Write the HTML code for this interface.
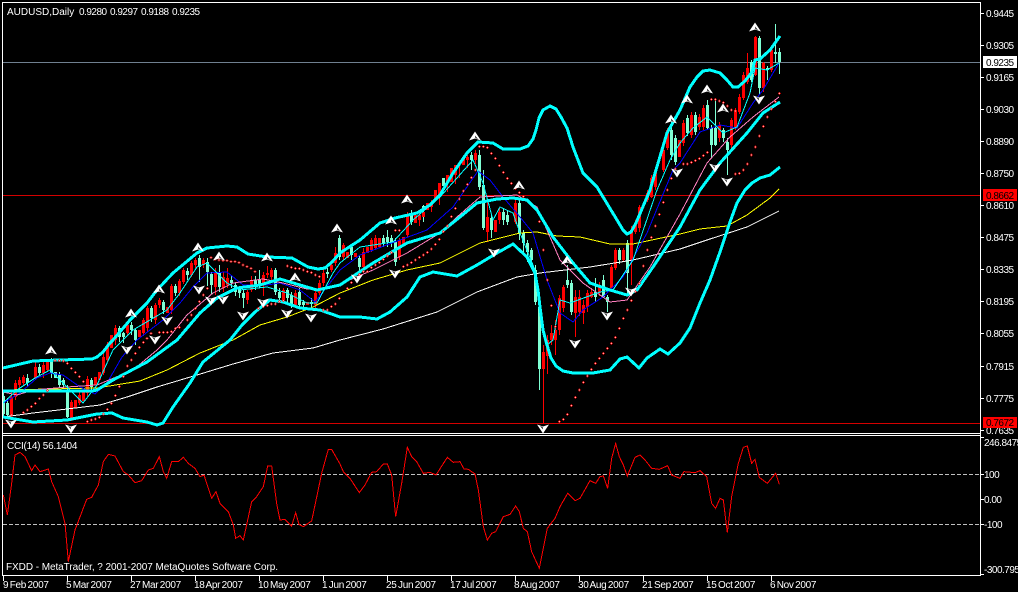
<!DOCTYPE html>
<html><head><meta charset="utf-8"><title>AUDUSD,Daily</title>
<style>
html,body{margin:0;padding:0;background:#000;width:1018px;height:592px;overflow:hidden}
svg{display:block;position:absolute;left:0;top:0}
text{font-family:"Liberation Sans",sans-serif;font-size:10px;fill:#fff}
.l{fill:none;shape-rendering:crispEdges}
.c{fill:none;stroke:#0ff;stroke-width:3;stroke-linejoin:round;shape-rendering:crispEdges}
.s{fill:none;stroke:none;marker-start:url(#dot);marker-mid:url(#dot);marker-end:url(#dot)}
.ax text,.n{letter-spacing:-.5px}
.t{letter-spacing:-.25px}
.f{letter-spacing:-.06px}
.dt text{letter-spacing:-.3px;word-spacing:-1px}
</style></head><body>
<svg width="1018" height="592" viewBox="0 0 1018 592" xmlns="http://www.w3.org/2000/svg">
<defs>
<marker id="dot" markerUnits="userSpaceOnUse" markerWidth="9" markerHeight="9" refX="4.5" refY="4.5" viewBox="0 0 9 9">
<path d="M3 0h3v3h3v3H6v3H3V6H0V3h3z" fill="#f00"/><rect x="3" y="3" width="3" height="3" fill="#fff"/>
</marker>
<g id="u" transform="translate(-.5,.5)"><path d="M6 0L12 9L6 7L0 9Z" fill="#fff"/><path d="M6 4L9 7.6L6.4 6.4Z" fill="#000"/></g>
<g id="d" transform="translate(-.5,.5)"><path d="M0 0L6 2L12 0L6 9Z" fill="#fff"/><path d="M6 5L3 1.4L5.6 2.6Z" fill="#000"/></g>
</defs>

<!-- horizontal levels -->
<path class="l" stroke="#708090" d="M3 62.5H980"/>
<path class="l" stroke="#d40000" d="M3 195.5H980M3 423.5H980"/>

<!-- wicks -->
<path class="l" stroke="#f00" d="M11.5 390V418M15.5 380V400M19.5 377V388M23.5 375V385M35.5 362V380M43.5 362V378M47.5 360V372M71.5 400V421M79.5 392V405M87.5 376V396M103.5 352V375M107.5 342V362M115.5 325V345M127.5 322V336M143.5 318V336M147.5 306V332M155.5 303V324M159.5 298V308M171.5 284V314M179.5 279V296M183.5 268V284M191.5 261V277M195.5 258V268M203.5 258V268M215.5 268V295M223.5 272V292M227.5 268V288M247.5 290V304M251.5 276V292M263.5 272V296M267.5 266V278M271.5 268V280M283.5 288V302M295.5 290V308M315.5 288V308M319.5 280V295M323.5 268V286M331.5 262V272M335.5 247V266M343.5 243V260M363.5 248V270M371.5 238V252M375.5 235V250M399.5 238V260M407.5 212V237M419.5 212V226M431.5 200V212M439.5 190V205M447.5 175V192M455.5 165V184M459.5 163V178M467.5 155V168M475.5 150V164M487.5 200V242M499.5 208V224M515.5 200V224M543.5 345V423M547.5 335V374M551.5 325V345M555.5 320V355M559.5 295V335M563.5 285V312M575.5 290V337M579.5 290V316M583.5 300V324M587.5 290V312M591.5 288V298M599.5 282V296M611.5 265V292M615.5 248V270M623.5 248V262M631.5 226V285M635.5 220V234M639.5 205V232M647.5 190V202M651.5 175V198M655.5 168V190M663.5 148V172M667.5 128V150M683.5 120V146M691.5 112V138M699.5 114V130M703.5 105V130M719.5 122V142M731.5 118V148M735.5 108V130M739.5 94V114M743.5 72V100M747.5 53V84M755.5 36V76M763.5 62V92M771.5 48V72"/>
<path class="l" stroke="#7fffd4" d="M3.5 392V417M7.5 398V418M27.5 374V386M39.5 364V376M51.5 358V378M59.5 372V388M63.5 378V388M67.5 385V418M91.5 378V390M119.5 326V342M123.5 332V343M131.5 322V335M135.5 328V345M151.5 306V322M163.5 300V314M175.5 284V296M187.5 268V280M199.5 255V282M207.5 258V286M211.5 272V294M219.5 265V292M231.5 276V288M235.5 282V296M239.5 286V298M243.5 290V308M255.5 276V290M259.5 270V288M275.5 268V295M279.5 288V302M287.5 288V302M291.5 292V308M299.5 288V308M303.5 300V310M311.5 298V308M327.5 268V278M339.5 235V260M351.5 244V260M359.5 255V272M383.5 235V247M387.5 230V247M391.5 235V247M395.5 238V266M411.5 210V225M423.5 205V222M471.5 152V170M479.5 150V190M483.5 170V230M491.5 215V238M503.5 208V225M507.5 210V225M519.5 198V240M523.5 230V255M527.5 240V262M531.5 248V265M535.5 265V305M539.5 300V390M567.5 265V288M571.5 280V315M595.5 278V302M603.5 275V298M607.5 295V312M619.5 248V264M627.5 240V295M671.5 122V160M675.5 135V165M687.5 115V136M695.5 112V135M707.5 100V130M711.5 125V158M715.5 100V146M723.5 128V142M727.5 138V175M751.5 60V82M759.5 36V94M767.5 66V80M775.5 24V63M779.5 48V74"/>
<!-- bodies -->
<path class="l" stroke="#f00" stroke-width="3" d="M11.5 397V415M15.5 383V397M19.5 380V385M23.5 377V383M35.5 367V378M43.5 365V373M47.5 362V370M71.5 402V418M75.5 400V408M79.5 395V403M83.5 390V401M87.5 379V393M95.5 377V385M99.5 372V380M103.5 357V373M107.5 345V360M111.5 335V348M115.5 328V340M127.5 325V333M139.5 330V337M143.5 320V333M147.5 308V328M155.5 305V320M159.5 300V305M167.5 307V313M171.5 286V310M179.5 281V293M183.5 270V282M191.5 263V275M195.5 260V265M203.5 260V265M215.5 272V287M223.5 277V288M227.5 278V285M247.5 292V300M251.5 280V290M263.5 275V283M267.5 273V275M271.5 270V277M283.5 290V300M295.5 293V305M307.5 302V305M315.5 293V305M319.5 283V293M323.5 273V283M331.5 265V270M335.5 253V263M343.5 245V257M347.5 252V258M355.5 253V257M363.5 252V267M367.5 247V253M371.5 240V250M375.5 238V248M379.5 238V247M399.5 240V257M403.5 237V245M407.5 215V235M415.5 215V223M419.5 215V220M423.5 212V217M427.5 203V210M431.5 203V207M435.5 190V200M439.5 183V195M447.5 175V183M451.5 168V182M455.5 165V175M463.5 157V165M467.5 157V160M475.5 153V160M487.5 217V232M495.5 220V232M499.5 212V220M515.5 203V222M543.5 352V369M547.5 340V356M551.5 333V340M555.5 330V340M559.5 298V330M563.5 287V308M575.5 297V313M579.5 297V312M583.5 305V313M587.5 293V307M591.5 292V297M599.5 285V293M611.5 267V288M615.5 250V268M623.5 250V260M631.5 230V260M635.5 223V232M639.5 207V228M647.5 193V200M651.5 178V197M655.5 170V187M663.5 150V170M667.5 130V148M679.5 140V157M683.5 123V143M691.5 115V135M699.5 117V127M703.5 108V127M719.5 125V138M731.5 120V145M735.5 110V127M739.5 97V112M743.5 75V98M747.5 68V82M755.5 37V75M763.5 63V88M771.5 50V70"/>
<path class="l" stroke="#7fffd4" stroke-width="3" d="M3.5 396V414M7.5 403V415M27.5 378V383M39.5 367V373M51.5 362V373M55.5 372V378M59.5 375V385M63.5 380V385M67.5 390V417M91.5 380V387M119.5 328V337M123.5 333V337M131.5 325V330M135.5 330V340M151.5 308V318M163.5 302V310M175.5 286V293M187.5 271V275M199.5 258V267M207.5 262V272M211.5 274V285M219.5 272V287M231.5 280V283M235.5 285V292M239.5 288V293M243.5 293V298M255.5 280V285M259.5 280V285M275.5 270V292M279.5 292V298M287.5 290V298M291.5 295V305M299.5 292V305M303.5 302V305M311.5 302V304M327.5 272V274M339.5 238V257M351.5 247V255M359.5 258V267M383.5 238V243M387.5 237V242M391.5 238V243M395.5 242V262M411.5 213V222M423.5 206V210M443.5 178V186M471.5 155V160M479.5 155V187M483.5 185V228M491.5 218V230M503.5 212V220M507.5 215V222M519.5 203V233M523.5 233V243M527.5 243V252M531.5 250V260M535.5 270V302M539.5 307V369M567.5 280V285M571.5 283V312M595.5 292V297M603.5 280V297M607.5 297V302M619.5 250V260M627.5 243V273M671.5 130V155M675.5 138V162M687.5 118V133M695.5 115V132M707.5 105V128M711.5 128V145M715.5 128V145M723.5 130V138M727.5 142V150M751.5 62V80M759.5 38V88M767.5 68V70M775.5 52V54M779.5 52V62"/>

<!-- moving averages -->
<polyline class="l" stroke="#fff" points="3,417 33,413 67,409 100,405 127,397 157,387 197,375 233,364 273,353 313,348 340,340 383,329 437,312 477,292 517,277 540,273 590,267 633,260 680,249 710,239 747,227 779,211"/>
<polyline class="l" stroke="#ff0" points="3,390 97,388 140,381 167,370 200,353 233,340 260,325 287,317 313,307 340,293 373,280 407,270 440,263 460,253 480,243 520,233 537,232 557,236 580,237 610,244 633,244 680,234 700,229 727,226 747,215 770,198 779,189"/>
<polyline class="l" stroke="#00f" points="3,403 20,393 37,378 50,373 63,375 80,387 95,394 107,383 122,357 137,340 163,320 180,303 193,287 207,273 227,272 243,285 267,285 280,283 300,290 315,302 340,270 360,255 400,240 427,230 453,207 478,171 490,180 503,197 520,217 533,233 547,280 560,313 573,322 583,310 603,297 623,277 647,233 673,170 680,163 700,132 720,125 737,128 753,103 763,90 779,63"/>
<polyline class="l" stroke="#ff80c0" points="3,392 17,395 33,390 67,387 97,385 133,370 157,350 167,340 187,315 213,293 233,283 263,279 283,283 307,289 320,290 340,284 373,270 407,253 440,233 457,217 480,197 517,195 537,207 560,260 583,283 610,302 627,300 650,267 680,214 707,163 730,137 753,117 779,97"/>
<polyline class="l" stroke="#0ff" points="3,403 17,390 35,378 50,370 63,383 83,403 97,385 113,350 133,330 167,310 180,293 197,267 207,263 227,283 240,290 267,287 287,293 307,303 317,303 333,273 340,263 360,247 393,242 413,220 440,197 473,160 483,183 493,220 500,207 513,213 520,233 535,270 540,313 547,345 553,340 560,300 570,303 600,292 613,290 633,260 657,190 670,160 680,143 693,128 707,117 723,133 737,127 750,93 755,68 767,70 779,63"/>

<!-- bands -->
<polyline class="c" points="3,368 33,361 60,360 92,359 97,357 103,352 110,343 113,340 130,320 147,303 157,290 173,273 197,253 207,248 227,246 237,247 248,254 267,257 292,258 308,267 318,269 325,268 332,262 340,253 360,240 380,223 395,218 417,213 430,205 440,195 453,173 467,153 478,142 493,143 503,149 520,149 528,146 533,139 536,130 539,118 543,110 550,106 556,109 561,117 567,128 573,147 583,173 597,187 617,220 623,230 627,234 631,232 636,223 650,190 667,133 680,110 690,87 697,77 703,71 710,70 720,73 727,80 733,87 738,87 745,81 752,72 755,60 760,59 770,50 780,36"/>
<polyline class="c" points="3,391 92,391 97,390 113,380 147,362 177,340 200,313 217,298 237,288 260,285 280,279 300,285 317,290 340,285 373,263 407,243 440,233 460,217 477,203 497,199 513,198 527,200 537,210 553,237 573,263 590,283 610,290 627,295 637,290 653,267 680,227 700,190 720,163 747,133 763,113 780,102"/>
<polyline class="c" points="3,417 33,422 67,420 97,414 112,413 123,418 147,422 157,425 163,423 173,407 190,383 203,362 230,340 242,325 255,312 270,300 283,302 300,308 320,310 340,317 360,317 377,319 390,312 407,297 420,277 433,272 457,276 477,265 497,253 513,244 527,257 535,273 538,290 540,307 543,330 547,345 551,358 556,366 563,371 573,373 593,373 610,370 620,359 627,357 639,368 647,358 660,349 668,354 680,343 690,328 700,303 710,280 720,252 730,222 737,203 745,190 752,183 760,178 770,175 780,167"/>

<!-- SAR dots -->
<g transform="translate(0,340) scale(.33333)">
<path class="s" d="M35 225L70 218L82 210L94 200L106 190L118 176L130 165L142 152M165 62L178 62L190 63L202 70L214 85L226 97L238 110L250 125M262 245L274 240L286 237L298 232L310 222L322 208L334 190L346 167L358 140L370 110L382 78L394 60L406 40L418 22L430 7"/>
</g>
<g transform="scale(.33333)">
<path class="s" d="M441 1015L453 1000M478 997L490 997L502 997L514 995L526 985L538 982L562 960L574 945L586 925L598 905L610 885L622 865M633 773L645 778L657 780L669 782L681 782L693 785L705 785L717 788L729 795L741 800L753 805L765 815M775 925L790 920L802 917L814 912L826 912L838 905L850 902M862 798L874 802L886 805L898 806L910 810L922 815L934 818L946 825L958 830M970 930L982 930L994 920L1006 912L1018 895"/>
</g>
<g transform="translate(340,100) scale(.33333)">
<path class="s" d="M22 565L34 548L46 535L58 523L70 515L82 515L94 503L106 495L118 488L130 478L142 468L154 458M166 391L178 391M190 500L202 495L214 488L226 480L238 472L250 465L262 457L274 447L286 433L298 418L310 395L322 378L334 350L346 325L358 297L370 273L382 253L394 233L406 210M418 140L430 140L442 143L454 160L466 175L478 197L490 217L502 235L514 250L526 265L538 278L550 290M598 365L610 450L622 540L634 617L646 680M826 712L838 685L850 655L862 630L874 602L886 575L898 550L910 498L922 450L934 412L946 378L958 343L970 307L982 270L994 235L1006 207"/>
</g>
<g transform="translate(340,340) scale(.33333)">
<path class="s" d="M658 245L670 238L682 223L694 197L706 172L718 150L730 127L742 108L754 88L766 70L778 55L790 40L802 25L814 10"/>
</g>
<g transform="translate(680,0) scale(.33333)">
<path class="s" d="M10 492L22 492L34 487L46 482L58 476L70 467L82 457M94 298L106 298L118 303L130 308L142 318L154 330L166 333M166 522L178 520L190 510L202 492L214 465L226 441L238 408L250 379L262 351L274 327L286 305L298 280"/>
</g>

<!-- fractals up -->
<g>
<use href="#u" x="45.5" y="345"/><use href="#u" x="125.5" y="308"/><use href="#u" x="153.5" y="284"/><use href="#u" x="192.5" y="242"/><use href="#u" x="213.5" y="251"/><use href="#u" x="261.5" y="252"/><use href="#u" x="289.5" y="272"/><use href="#u" x="331.5" y="223"/><use href="#u" x="385.5" y="215"/><use href="#u" x="401.5" y="194"/><use href="#u" x="469.5" y="131"/><use href="#u" x="513.5" y="180"/><use href="#u" x="561.5" y="255"/><use href="#u" x="665.5" y="114"/><use href="#u" x="681.5" y="94"/><use href="#u" x="701.5" y="84"/><use href="#u" x="717.5" y="103"/><use href="#u" x="749.5" y="22"/>
<!-- fractals down -->
<use href="#d" x="5.5" y="419"/><use href="#d" x="65.5" y="424"/><use href="#d" x="121.5" y="345"/><use href="#d" x="149.5" y="335"/><use href="#d" x="161.5" y="316"/><use href="#d" x="193.5" y="285"/><use href="#d" x="205.5" y="296"/><use href="#d" x="217.5" y="295"/><use href="#d" x="237.5" y="311"/><use href="#d" x="257.5" y="298"/><use href="#d" x="281.5" y="309"/><use href="#d" x="305.5" y="313"/><use href="#d" x="351.5" y="274"/><use href="#d" x="389.5" y="269"/><use href="#d" x="488.5" y="248"/><use href="#d" x="537.5" y="424"/><use href="#d" x="569.5" y="339"/><use href="#d" x="601.5" y="311"/><use href="#d" x="625.5" y="287"/><use href="#d" x="671.5" y="168"/><use href="#d" x="709.5" y="163"/><use href="#d" x="721.5" y="177"/><use href="#d" x="753.5" y="95"/>
</g>

<!-- CCI -->
<path class="l" stroke="#c0c0c0" stroke-dasharray="4 2" d="M3 474.5H980M3 524.5H980"/>
<g transform="translate(0,340) scale(.33333)"><polyline class="l" stroke="#f00" stroke-width="3" points="10,465 22,525 35,430 45,345 60,337 75,350 95,392 105,375 120,395 145,387 155,425 175,470 195,550 205,665 225,570 260,478 275,472 295,435 310,365 325,343 345,348 370,395 385,405 405,428 425,422 445,390 460,385 478,350 490,395 500,415 515,365 535,365 550,352 565,370 585,385 600,410 612,405 635,475 648,455 660,490 685,515 700,555 707,595 720,587 730,600 755,485 770,470 790,440 803,378 815,378 830,490 840,540 855,538 875,558 887,518 897,553 910,560 935,543 965,400 985,328 995,328 1020,372 1030,395 1050,415 1078,458 1095,435 1115,397 1130,395 1150,372 1162,372 1175,405 1187,530 1205,430 1222,322 1235,350 1250,365 1270,400 1290,397 1308,405 1342,352 1360,367 1380,365 1392,387 1405,388 1425,402 1435,450 1450,560 1462,600 1475,580 1487,575 1510,530 1530,523 1547,498 1558,515 1570,565 1582,575 1595,635 1618,685 1642,565 1665,535 1680,500 1703,460 1725,482 1740,475 1770,422 1787,430 1800,410 1810,408 1823,445 1835,355 1847,310 1858,350 1870,375 1882,408 1905,352 1920,345 1935,360 1955,385 1978,388 2003,377 2015,405 2040,415 2052,395 2085,398 2100,392 2120,410 2135,490 2147,505 2160,475 2170,480 2182,578 2195,470 2215,370 2230,322 2242,318 2255,370 2265,358 2278,412 2302,430 2327,400 2338,433"/></g>

<!-- frames -->
<path class="l" stroke="#fff" d="M2.5 2.5H980.5V575.5H2.5ZM2.5 433.5H980.5M2.5 435.5H980.5"/>
<!-- axis ticks -->
<path class="l" stroke="#fff" d="M981 13.5h3M981 45.5h3M981 77.5h3M981 109.5h3M981 141.5h3M981 173.5h3M981 205.5h3M981 237.5h3M981 269.5h3M981 301.5h3M981 333.5h3M981 366.5h3M981 398.5h3M981 430.5h3M981 437.5h3M981 474.5h3M981 499.5h3M981 524.5h3M981 574.5h3M3.5 576v5M67.5 576v5M131.5 576v5M195.5 576v5M259.5 576v5M323.5 576v5M387.5 576v5M451.5 576v5M515.5 576v5M579.5 576v5M643.5 576v5M707.5 576v5M771.5 576v5"/>

<!-- price axis -->
<g class="ax">
<text x="986" y="17">0.9445</text>
<text x="986" y="49">0.9305</text>
<text x="986" y="81">0.9165</text>
<text x="986" y="113">0.9030</text>
<text x="986" y="145">0.8890</text>
<text x="986" y="177">0.8750</text>
<text x="986" y="209">0.8610</text>
<text x="986" y="241">0.8475</text>
<text x="986" y="273">0.8335</text>
<text x="986" y="305">0.8195</text>
<text x="986" y="337">0.8055</text>
<text x="986" y="370">0.7915</text>
<text x="986" y="402">0.7775</text>
<text x="986" y="434">0.7635</text>
<rect x="983" y="56" width="34" height="12" fill="#fff"/>
<text x="986" y="66" style="fill:#000">0.9235</text>
<rect x="983" y="189" width="34" height="12" fill="#f00"/>
<text x="986" y="199" style="fill:#000">0.8662</text>
<rect x="983" y="417" width="34" height="11" fill="#f00"/>
<text x="986" y="426" style="fill:#000">0.7672</text>
<text x="984" y="446">246.8475</text>
<text x="984" y="478">100</text>
<text x="984" y="503">0.00</text>
<text x="984" y="528">-100</text>
<text x="984" y="573">-300.795</text>
</g>

<!-- titles -->
<text x="7" y="15" class="n" style="letter-spacing:0">AUDUSD,Daily</text>
<text x="79" y="15" class="n">0.9280</text>
<text x="110" y="15" class="n">0.9297</text>
<text x="141" y="15" class="n">0.9188</text>
<text x="172" y="15" class="n">0.9235</text>
<text x="7" y="449" class="t">CCI(14) 56.1404</text>
<text x="6" y="570" class="f">FXDD - MetaTrader, ? 2001-2007 MetaQuotes Software Corp.</text>

<!-- dates -->
<g class="dt">
<text x="3" y="588">9 Feb 2007</text>
<text x="66" y="588">5 Mar 2007</text>
<text x="130" y="588">27 Mar 2007</text>
<text x="194" y="588">18 Apr 2007</text>
<text x="258" y="588">10 May 2007</text>
<text x="322" y="588">1 Jun 2007</text>
<text x="386" y="588">25 Jun 2007</text>
<text x="450" y="588">17 Jul 2007</text>
<text x="514" y="588">8 Aug 2007</text>
<text x="578" y="588">30 Aug 2007</text>
<text x="642" y="588">21 Sep 2007</text>
<text x="706" y="588">15 Oct 2007</text>
<text x="770" y="588">6 Nov 2007</text>
</g>
</svg>
</body></html>
